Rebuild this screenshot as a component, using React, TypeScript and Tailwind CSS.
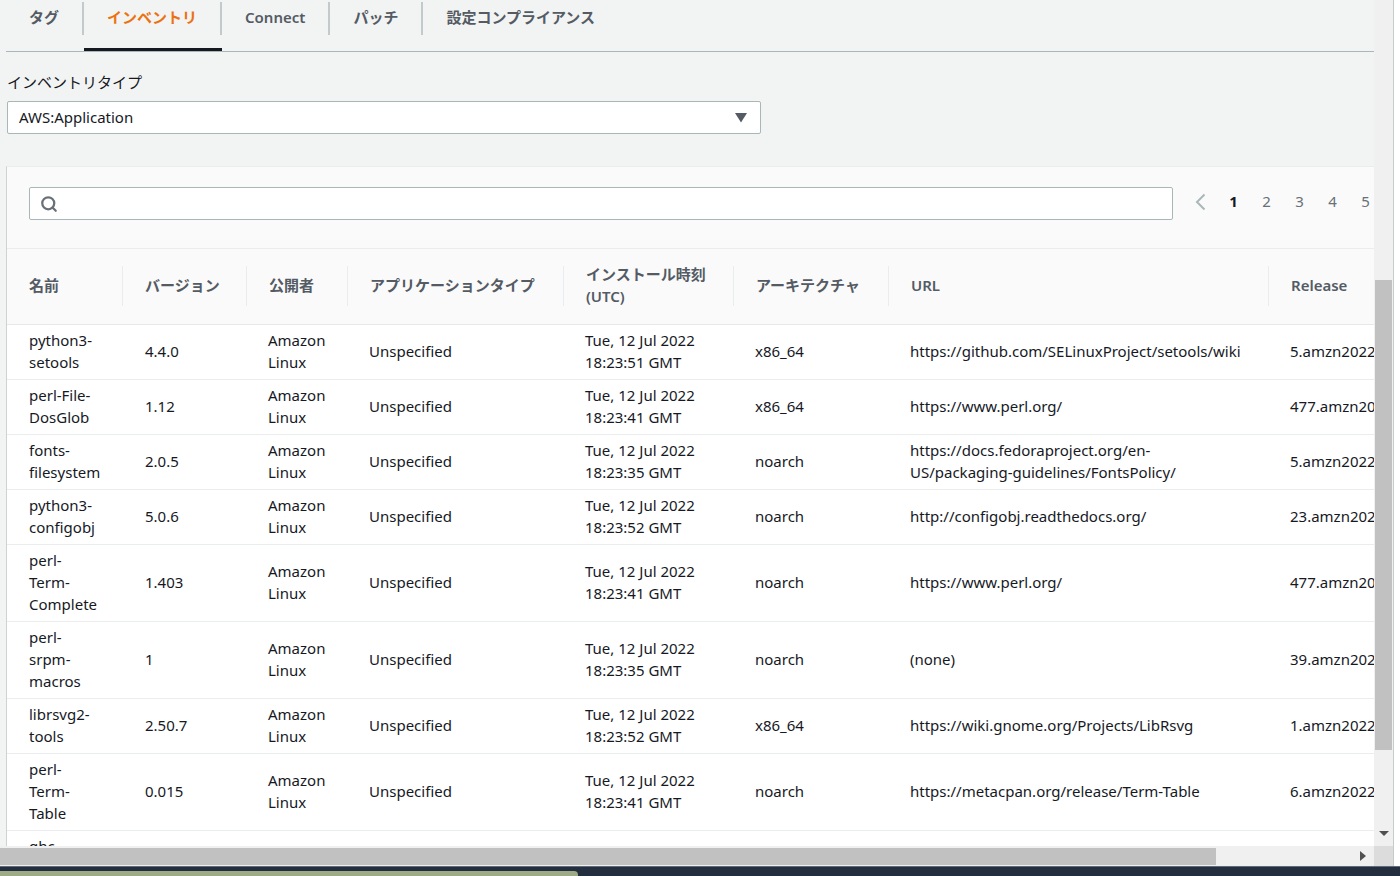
import { Search } from "lucide-react";

const tabs = [
  { label: "タグ" },
  { label: "インベントリ", active: true },
  { label: "Connect" },
  { label: "パッチ" },
  { label: "設定コンプライアンス" },
];

const columns = [
  { label: "名前", width: "w-[116px]" },
  { label: "バージョン", width: "w-[124px]" },
  { label: "公開者", width: "w-[101px]" },
  { label: "アプリケーションタイプ", width: "w-[216px]" },
  { label: "インストール時刻 (UTC)", width: "w-[170px]" },
  { label: "アーキテクチャ", width: "w-[155px]" },
  { label: "URL", width: "w-auto" },
  { label: "Release", width: "w-[168px]" },
];

type Row = { name: string[]; version: string; time: string; arch: string; url: string[]; release: string };

const rows: Row[] = [
  { name: ["python3-", "setools"], version: "4.4.0", time: "18:23:51", arch: "x86_64", url: ["https://github.com/SELinuxProject/setools/wiki"], release: "5.amzn2022" },
  { name: ["perl-File-", "DosGlob"], version: "1.12", time: "18:23:41", arch: "x86_64", url: ["https://www.perl.org/"], release: "477.amzn2022" },
  { name: ["fonts-", "filesystem"], version: "2.0.5", time: "18:23:35", arch: "noarch", url: ["https://docs.fedoraproject.org/en-", "US/packaging-guidelines/FontsPolicy/"], release: "5.amzn2022" },
  { name: ["python3-", "configobj"], version: "5.0.6", time: "18:23:52", arch: "noarch", url: ["http://configobj.readthedocs.org/"], release: "23.amzn2022" },
  { name: ["perl-", "Term-", "Complete"], version: "1.403", time: "18:23:41", arch: "noarch", url: ["https://www.perl.org/"], release: "477.amzn2022" },
  { name: ["perl-", "srpm-", "macros"], version: "1", time: "18:23:35", arch: "noarch", url: ["(none)"], release: "39.amzn2022" },
  { name: ["librsvg2-", "tools"], version: "2.50.7", time: "18:23:52", arch: "x86_64", url: ["https://wiki.gnome.org/Projects/LibRsvg"], release: "1.amzn2022" },
  { name: ["perl-", "Term-", "Table"], version: "0.015", time: "18:23:41", arch: "noarch", url: ["https://metacpan.org/release/Term-Table"], release: "6.amzn2022" },
  { name: ["ghc-", "srpm-"], version: "", time: "", arch: "", url: [], release: "" },
];

function Lines({ parts }: { parts: string[] }) {
  return (
    <>
      {parts.map((part) => (
        <span key={part} className="block whitespace-nowrap">{part}</span>
      ))}
    </>
  );
}

function Tabs() {
  return (
    <nav className="ml-1.5 flex h-[52px] shrink-0 items-start border-b border-[#aab7b8]">
      {tabs.map((tab, i) => (
        <div key={tab.label} className="relative flex h-full items-start pt-0.5">
          <a
            href="#"
            className={
              tab.active
                ? "flex h-[33px] items-center border-r-2 border-[#c3cacb] px-[23px] pb-1 font-semibold text-[#ec7211] whitespace-nowrap"
                : i === tabs.length - 1
                  ? "flex h-[33px] items-center px-[23px] pb-1 font-semibold text-[#545b64] whitespace-nowrap"
                  : "flex h-[33px] items-center border-r-2 border-[#c3cacb] px-[23px] pb-1 font-semibold text-[#545b64] whitespace-nowrap"
            }
          >
            {tab.label}
          </a>
          {tab.active && <span className="absolute inset-x-0 bottom-0 h-[3px] bg-[#16191f]" />}
        </div>
      ))}
    </nav>
  );
}

function Pagination() {
  return (
    <div className="flex shrink-0 items-center text-[#687078]">
      <button type="button" aria-label="前のページ" className="flex h-[30px] w-[33px] items-center justify-center">
        <svg width="12" height="18" viewBox="0 0 12 18" fill="none" stroke="#aab7b8" strokeWidth="2">
          <path d="M9.500 1.500 2 9l7.500 7.500" />
        </svg>
      </button>
      {[1, 2, 3, 4, 5].map((n) => (
        <button
          key={n}
          type="button"
          className={n === 1 ? "h-[30px] w-[33px] pb-0.5 font-bold text-[#16191f]" : "h-[30px] w-[33px] pb-0.5"}
        >
          {n}
        </button>
      ))}
      <button type="button" aria-label="次のページ" className="flex h-[30px] w-[33px] items-center justify-center">
        <svg width="12" height="18" viewBox="0 0 12 18" fill="none" stroke="#687078" strokeWidth="2">
          <path d="M2.500 1.500 10 9l-7.500 7.500" />
        </svg>
      </button>
    </div>
  );
}

function InventoryTable() {
  return (
    <table className="w-full table-fixed border-collapse text-left">
      <thead>
        <tr className="h-[75px] border-b border-[#e6e9e9] bg-[#fafafa] text-[#545b64]">
          {columns.map((c, i) => (
            <th key={c.label} scope="col" className={`${c.width} p-0 align-middle font-semibold`}>
              <div
                className={
                  i === columns.length - 1
                    ? "flex h-[40px] items-center pb-0.5 pl-[22px]"
                    : "flex h-[40px] items-center border-r border-[#eaeded] pb-0.5 pl-[22px]"
                }
              >
                <span className={i === 4 ? "" : "whitespace-nowrap"}>{c.label}</span>
              </div>
            </th>
          ))}
        </tr>
      </thead>
      <tbody className="text-[#16191f]">
        {rows.map((r) => (
          <tr key={r.name.join("")} className="border-b border-[#eaeded] bg-white">
            <td className="pt-1 pb-1.5 pl-[22px]"><Lines parts={r.name} /></td>
            <td className="pt-1 pb-1.5 pl-[22px]">{r.version}</td>
            <td className="pt-1 pb-1.5 pl-[21px]">{r.version && <Lines parts={["Amazon", "Linux"]} />}</td>
            <td className="pt-1 pb-1.5 pl-[21px]">{r.version && "Unspecified"}</td>
            <td className="pt-1 pb-1.5 pl-[21px]">{r.time && <Lines parts={["Tue, 12 Jul 2022", `${r.time} GMT`]} />}</td>
            <td className="pt-1 pb-1.5 pl-[21px]">{r.arch}</td>
            <td className="pt-1 pb-1.5 pl-[21px]"><Lines parts={r.url} /></td>
            <td className="pt-1 pb-1.5 pl-[21px]">{r.release}</td>
          </tr>
        ))}
      </tbody>
    </table>
  );
}

export default function App() {
  return (
    <div className="flex h-screen flex-col overflow-hidden bg-white font-['Noto_Sans','Noto_Sans_CJK_JP',sans-serif] text-[15px] leading-[22px] text-[#16191f]">
      <div className="mr-1.5 flex min-h-0 flex-1 border-r border-[#c5cbcb] bg-[#f2f3f3]">
        <div className="flex min-w-0 flex-1 flex-col">
          <main className="min-h-0 flex-1 overflow-hidden">
            <Tabs />
            <div className="ml-[7px] mt-[19px] w-[754px] max-w-full">
              <label htmlFor="inventory-type" className="block h-[30px]">インベントリタイプ</label>
              <div className="relative">
                <select
                  id="inventory-type"
                  className="h-[33px] w-full appearance-none rounded-[2px] border border-[#aab7b8] bg-white px-[11px] pb-0.5 text-[#16191f]"
                >
                  <option>AWS:Application</option>
                </select>
                <svg className="pointer-events-none absolute right-3.5 top-3" width="12" height="10" viewBox="0 0 12 10">
                  <path d="M0 0h12L6 9.500z" fill="#545b64" />
                </svg>
              </div>
            </div>
            <section className="ml-1.5 mt-8 min-w-[1431px] border-l border-t border-l-[#cdd3d3] border-t-[#eaeded] bg-white">
              <div className="flex h-[82px] items-start border-b border-[#eaeded] bg-[#fafafa] px-[22px] pt-5">
                <div className="relative mr-[11px] flex-1">
                  <Search className="absolute left-[11px] top-2 size-[18px] text-[#687078]" strokeWidth={3} />
                  <input
                    type="search"
                    aria-label="インベントリを検索"
                    className="block h-[33px] w-full rounded-[2px] border border-[#aab7b8] bg-white pl-9 pr-3"
                  />
                </div>
                <Pagination />
              </div>
              <InventoryTable />
            </section>
          </main>
          <div className="flex h-5 shrink-0 items-center bg-[#f0f0f0]">
            <div className="flex min-w-0 flex-1">
              <div className="h-[17px] flex-[1216] bg-[#c1c1c1]" />
              <div className="flex-[144]" />
            </div>
            <svg className="mr-2 shrink-0" width="6" height="10" viewBox="0 0 6 10">
              <path d="M0 0v10l6-5z" fill="#505050" />
            </svg>
          </div>
        </div>
        <div className="flex w-[19px] shrink-0 flex-col items-center bg-[#f0f0f0]">
          <div className="flex min-h-0 w-full flex-1 flex-col px-px">
            <div className="flex-[280]" />
            <div className="flex-[470] bg-[#c1c1c1]" />
            <div className="flex-[81]" />
          </div>
          <svg className="mb-2.5 shrink-0" width="10" height="5" viewBox="0 0 10 5">
            <path d="M0 0h10L5 5z" fill="#505050" />
          </svg>
          <div className="h-5 w-full shrink-0 bg-[#dcdcdc]" />
        </div>
      </div>
      <footer className="flex h-2.5 shrink-0 items-end overflow-hidden border-t border-[#5f6b7a] bg-[#232f3e]">
        <div className="h-[5px] w-[578px] rounded-tr-[4px] bg-[#9dab86]" />
      </footer>
    </div>
  );
}
